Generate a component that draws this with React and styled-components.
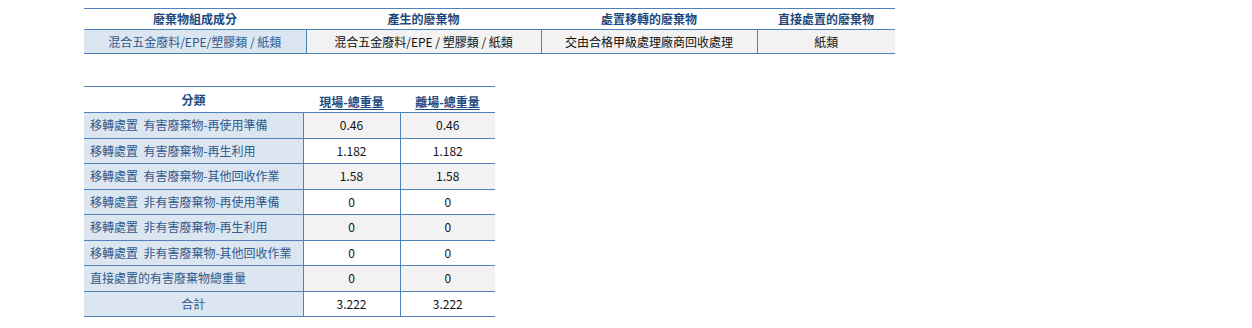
import React from 'react'
import styled, { createGlobalStyle } from 'styled-components'

const Global = createGlobalStyle`
  body {
    margin: 0;
    background: #ffffff;
    font-family: "Noto Sans CJK TC", "Noto Sans", sans-serif;
  }
`

const Page = styled.div`
  display: flex;
  flex-direction: column;
  align-items: flex-start;
  gap: 32px;
  padding: 8px 0 0 84px;
`

const Sheet = styled.table`
  border-collapse: collapse;
  table-layout: fixed;
  font-size: 12px;
  line-height: 1;
  border-top: 1px solid #4f81bd;
  border-bottom: 1px solid #4f81bd;
`

const HeadCell = styled.th`
  height: ${p => p.$h || 20}px;
  padding: 0 4px;
  font-weight: 700;
  color: #1f497d;
  text-align: center;
  vertical-align: ${p => (p.$low ? 'bottom' : 'middle')};
  padding-bottom: ${p => (p.$low ? '4px' : '0')};
  text-decoration: ${p => (p.$link ? 'underline' : 'none')};
  text-underline-offset: 2px;
  white-space: nowrap;
  border-bottom: 1px solid #4f81bd;
`

const LabelCell = styled.td`
  height: ${p => p.$h || 24.5}px;
  padding: 0 6px;
  background: #dce6f1;
  color: #30598c;
  text-align: ${p => (p.$center ? 'center' : 'left')};
  white-space: pre;
  border-top: 1px solid #4f81bd;
  border-right: 1px solid #4f81bd;
`

const ValueCell = styled.td`
  padding: 0 4px;
  background: ${p => (p.$shade ? '#f2f2f2' : '#ffffff')};
  color: #111111;
  text-align: center;
  white-space: nowrap;
  border-top: 1px solid #4f81bd;
  border-right: ${p => (p.$last ? 'none' : '1px solid #4f81bd')};
`

const rows = [
  ['移轉處置  有害廢棄物-再使用準備', '0.46', '0.46'],
  ['移轉處置  有害廢棄物-再生利用', '1.182', '1.182'],
  ['移轉處置  有害廢棄物-其他回收作業', '1.58', '1.58'],
  ['移轉處置  非有害廢棄物-再使用準備', '0', '0'],
  ['移轉處置  非有害廢棄物-再生利用', '0', '0'],
  ['移轉處置  非有害廢棄物-其他回收作業', '0', '0'],
  ['直接處置的有害廢棄物總重量', '0', '0'],
]

export default function App() {
  return (
    <>
      <Global />
      <Page>
        <Sheet>
          <colgroup>
            <col style={{ width: 222 }} />
            <col style={{ width: 235 }} />
            <col style={{ width: 216 }} />
            <col style={{ width: 138 }} />
          </colgroup>
          <thead>
            <tr>
              <HeadCell>廢棄物組成成分</HeadCell>
              <HeadCell>產生的廢棄物</HeadCell>
              <HeadCell>處置移轉的廢棄物</HeadCell>
              <HeadCell>直接處置的廢棄物</HeadCell>
            </tr>
          </thead>
          <tbody>
            <tr>
              <LabelCell $center $h={23}>混合五金廢料/EPE/塑膠類 / 紙類</LabelCell>
              <ValueCell $shade>混合五金廢料/EPE / 塑膠類 / 紙類</ValueCell>
              <ValueCell $shade>交由合格甲級處理廠商回收處理</ValueCell>
              <ValueCell $shade $last>紙類</ValueCell>
            </tr>
          </tbody>
        </Sheet>

        <Sheet>
          <colgroup>
            <col style={{ width: 219 }} />
            <col style={{ width: 97 }} />
            <col style={{ width: 95 }} />
          </colgroup>
          <thead>
            <tr>
              <HeadCell $h={21}>分類</HeadCell>
              <HeadCell $h={21} $low $link>現場-總重量</HeadCell>
              <HeadCell $h={21} $low $link>離場-總重量</HeadCell>
            </tr>
          </thead>
          <tbody>
            {rows.map(([label, onsite, offsite], i) => (
              <tr key={label}>
                <LabelCell>{label}</LabelCell>
                <ValueCell $shade={i % 2 === 0}>{onsite}</ValueCell>
                <ValueCell $shade={i % 2 === 0} $last>{offsite}</ValueCell>
              </tr>
            ))}
            <tr>
              <LabelCell $center>合計</LabelCell>
              <ValueCell>3.222</ValueCell>
              <ValueCell $last>3.222</ValueCell>
            </tr>
          </tbody>
        </Sheet>
      </Page>
    </>
  )
}
